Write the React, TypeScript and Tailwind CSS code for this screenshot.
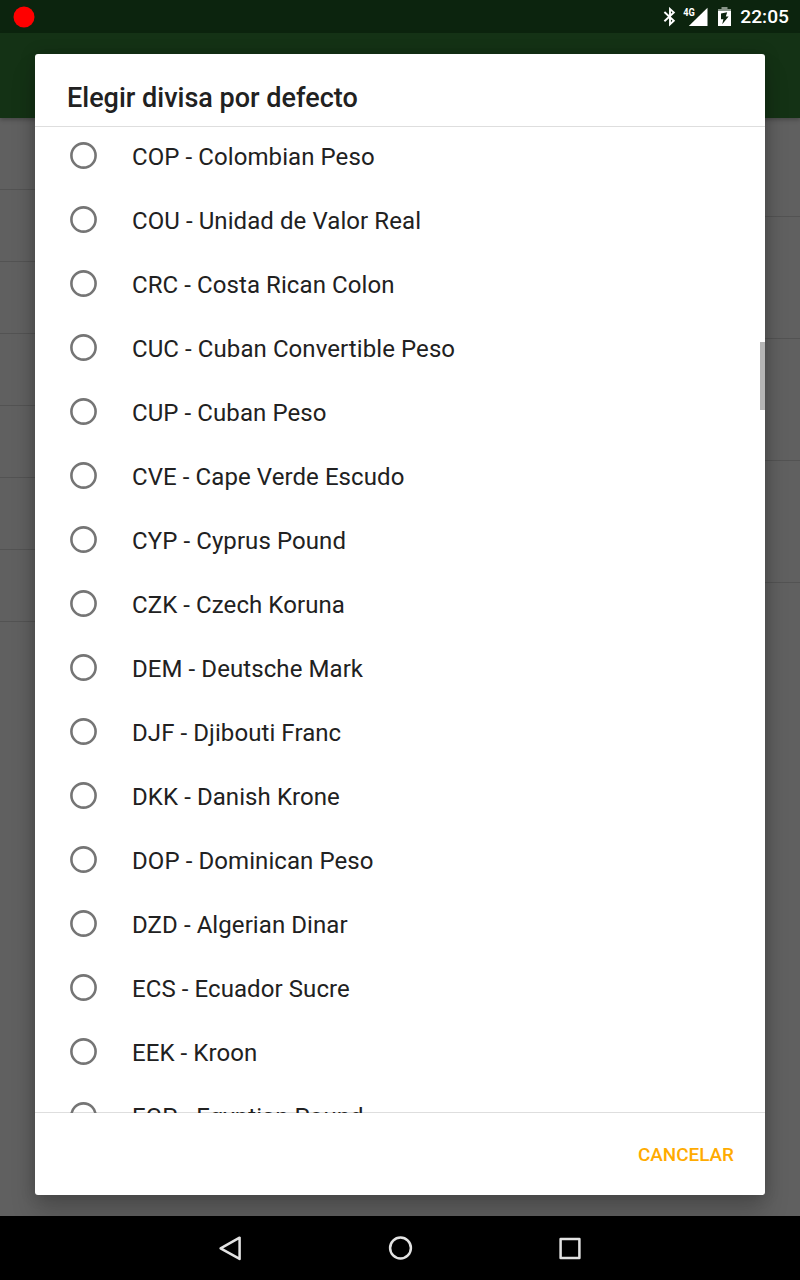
const currencies = [
  'COP - Colombian Peso',
  'COU - Unidad de Valor Real',
  'CRC - Costa Rican Colon',
  'CUC - Cuban Convertible Peso',
  'CUP - Cuban Peso',
  'CVE - Cape Verde Escudo',
  'CYP - Cyprus Pound',
  'CZK - Czech Koruna',
  'DEM - Deutsche Mark',
  'DJF - Djibouti Franc',
  'DKK - Danish Krone',
  'DOP - Dominican Peso',
  'DZD - Algerian Dinar',
  'ECS - Ecuador Sucre',
  'EEK - Kroon',
  'EGP - Egyptian Pound',
];

function StatusBar() {
  return (
    <header className="flex h-[33px] shrink-0 items-center bg-[#0c240e] pl-[13px] pr-[11px] text-white">
      <svg width="22" height="22" viewBox="0 0 22 22">
        <circle cx="11" cy="11" r="10.5" fill="#ff0000" />
      </svg>
      <div className="ml-auto flex items-center">
        <svg width="13" height="20" viewBox="0 0 13 20" fill="none" stroke="#fff" strokeWidth="1.9" className="mr-[7px]">
          <path d="M1.4 5 10.8 13.8 7 17.4V2L10.8 5.4 1.4 14.2" />
        </svg>
        <svg width="25" height="20" viewBox="0 0 25 20" className="mr-[10px]">
          <path d="M24.5 0.8V19H5.8z" fill="#fff" />
          <text x="0.2" y="9" fill="#fff" fontFamily="Roboto, sans-serif" fontSize="10.5" fontWeight="700" textLength="11.6" lengthAdjust="spacingAndGlyphs">4G</text>
        </svg>
        <svg width="13" height="20" viewBox="0 0 13 20" className="mr-[9px]">
          <path d="M3.5 0h6v2H13v2.5H0V2h3.5z" fill="#889589" />
          <path d="M0 4h13v15H0z" fill="#fff" />
          <path d="M9.2 5.2 3 6.6V12.2h2.4L4.2 17.3 10.6 9.6H7.8z" fill="#0c240e" />
        </svg>
        <span className="text-[19.2px] leading-5 font-medium">22:05</span>
      </div>
    </header>
  );
}

function SettingsPage() {
  return (
    <div className="flex h-[1098px]">
      <div className="w-1/2">
        {[0, 1, 2, 3, 4, 5, 6].map((i) => (
          <div key={i} className="h-[72px] border-b border-[#535353]" />
        ))}
      </div>
      <div className="w-1/2">
        <div className="h-[99px] border-b border-[#535353]" />
        {[0, 1, 2].map((i) => (
          <div key={i} className="h-[122px] border-b border-[#535353]" />
        ))}
      </div>
    </div>
  );
}

function CurrencyDialog() {
  return (
    <section
      role="dialog"
      className="absolute top-[54px] left-[35px] flex h-[1141px] w-[730px] flex-col rounded-[3px] bg-white text-[#212121] shadow-[0_18px_24px_rgba(0,0,0,0.18),0_0_16px_rgba(0,0,0,0.2)]"
    >
      <h1 className="h-[73px] shrink-0 border-b border-[#dedede] pt-7 pl-8 text-[27px] leading-8 font-medium">
        Elegir divisa por defecto
      </h1>
      <div className="relative z-10 h-[986px] shrink-0 overflow-hidden">
        <ul className="-mt-1">
          {currencies.map((name) => (
            <li key={name} className="flex h-16 items-center pl-[35px]">
              <svg width="27" height="27" viewBox="0 0 27 27" className="shrink-0">
                <circle cx="13.5" cy="13.5" r="12.1" fill="none" stroke="#757575" strokeWidth="2.6" />
              </svg>
              <span className="ml-[35px] pt-[3px] text-2xl leading-8 tracking-[0.08px]">{name}</span>
            </li>
          ))}
        </ul>
        <div className="absolute top-[215px] right-0 h-[68px] w-[5px] bg-[#b5b5b5]" />
      </div>
      <footer className="-mt-px flex flex-1 items-center justify-end border-t border-[#dedede] pt-px pr-[31px]">
        <button className="text-[18.9px] leading-6 font-medium text-[#ffab00]">CANCELAR</button>
      </footer>
    </section>
  );
}

function NavigationBar() {
  return (
    <nav className="relative z-20 flex h-16 shrink-0 items-center justify-center gap-[138px] bg-black">
      <svg width="32" height="32" viewBox="0 0 32 32" fill="none" stroke="#e3e3e3" strokeWidth="2.5" strokeLinejoin="round">
        <path d="M25.6 5.7v21.2L6.6 16.4z" />
      </svg>
      <svg width="32" height="32" viewBox="0 0 32 32" fill="none" stroke="#e3e3e3" strokeWidth="2.5">
        <circle cx="16.5" cy="16" r="10.4" />
      </svg>
      <svg width="32" height="32" viewBox="0 0 32 32" fill="none" stroke="#e3e3e3" strokeWidth="2.5" strokeLinejoin="round">
        <rect x="6.6" y="7" width="18.8" height="19" />
      </svg>
    </nav>
  );
}

export default function App() {
  return (
    <div className="relative flex h-[1280px] w-[800px] flex-col overflow-hidden bg-[#606060] font-['Roboto',sans-serif]">
      <StatusBar />
      <div className="relative h-[85px] shrink-0 bg-[#143215] shadow-[0_2px_4px_rgba(0,0,0,0.25)]" />
      <SettingsPage />
      <CurrencyDialog />
      <NavigationBar />
    </div>
  );
}
